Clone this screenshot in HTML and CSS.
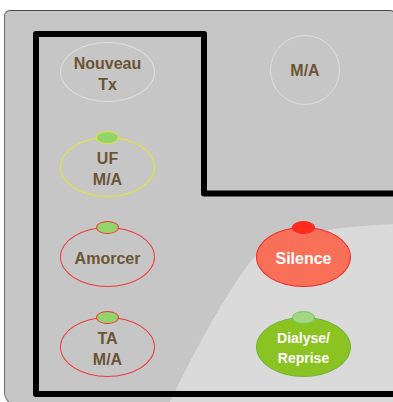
FILE: index.html
```html
<!DOCTYPE html>
<html>
<head>
<meta charset="utf-8">
<link rel="stylesheet" href="styles.css">
</head>
<body>
<div class="panel">
  <svg class="deco" width="393" height="410" viewBox="0 0 393 410">
    <path d="M165 412 C185 370 215 310 250 262 C275 235 320 228 395 224 L395 412 Z" fill="#dadada"/>
    <path d="M396 394 L36 394 L36 34 L204 34 L204 193.5 L396 193.5" fill="none" stroke="#000" stroke-width="6" stroke-linejoin="round"/>
  </svg>
  <div class="grid">
    <div class="btn plain"><span>Nouveau<br>Tx</span></div>
    <div class="btn plain circle"><span>M/A</span></div>
    <div class="btn yellow"><i class="led"></i><span>UF<br>M/A</span></div>
    <div></div>
    <div class="btn red"><i class="led"></i><span>Amorcer</span></div>
    <div class="btn silence"><i class="led"></i><span>Silence</span></div>
    <div class="btn red"><i class="led"></i><span>TA<br>M/A</span></div>
    <div class="btn dialyse"><i class="led"></i><span>Dialyse/<br>Reprise</span></div>
  </div>
</div>
</body>
</html>
```
FILE: styles.css
```css
html, body {
  margin: 0;
  padding: 0;
  background: #ffffff;
  width: 393px;
  height: 402px;
  overflow: hidden;
}

.panel {
  position: relative;
  margin: 10px 0 0 4px;
  width: 392px;
  height: 396px;
  box-sizing: border-box;
  background: #c6c6c6;
  border: 1px solid #6a6a6a;
  border-top-color: #4a4a4a;
  border-radius: 6px 6px 6px 14px;
  overflow: hidden;
}

.deco {
  position: absolute;
  left: -5px;
  top: -11px;
}

.grid {
  position: relative;
  display: grid;
  grid-template-columns: 95px 95px;
  grid-template-rows: 65px 60px 60px 60px;
  column-gap: 101px;
  row-gap: 30px;
  padding: 31px 0 0 55px;
}

.btn {
  position: relative;
  box-sizing: border-box;
  width: 95px;
  height: 60px;
  border-radius: 50%;
  border: 1.5px solid #e0e0e0;
  display: flex;
  align-items: center;
  justify-content: center;
  padding-top: 3px;
  text-align: center;
  font-family: "Liberation Sans", Arial, sans-serif;
  font-weight: bold;
  font-size: 16px;
  line-height: 21px;
  color: #6b5535;
}

.plain {
  border-color: #dedede;
}

.circle {
  width: 70px;
  height: 70px;
  justify-self: center;
  align-self: start;
  margin-top: -7px;
  margin-left: 3px;
  padding-top: 1px;
}

.yellow {
  border-color: #e6e62c;
}

.red {
  border-color: #f03a3a;
}

.silence {
  background: #f97059;
  border-color: #f02a2a;
  color: #ffffff;
  padding-top: 2px;
}

.dialyse {
  background: #8bc322;
  border-color: #72b43a;
  color: #ffffff;
  font-size: 14px;
  line-height: 20px;
  padding-top: 2px;
}

.led {
  position: absolute;
  left: 50%;
  top: -7px;
  width: 23px;
  height: 13px;
  margin-left: -11.5px;
  box-sizing: border-box;
  border-radius: 50%;
  background: #94d46c;
  border: 1.5px solid #f03a3a;
}

.yellow .led {
  border-color: #e6e62c;
}

.silence .led {
  background: #ff2b1c;
  border-color: #f02a2a;
}

.dialyse .led {
  background: #a0d884;
  border-color: #80c466;
}
```
